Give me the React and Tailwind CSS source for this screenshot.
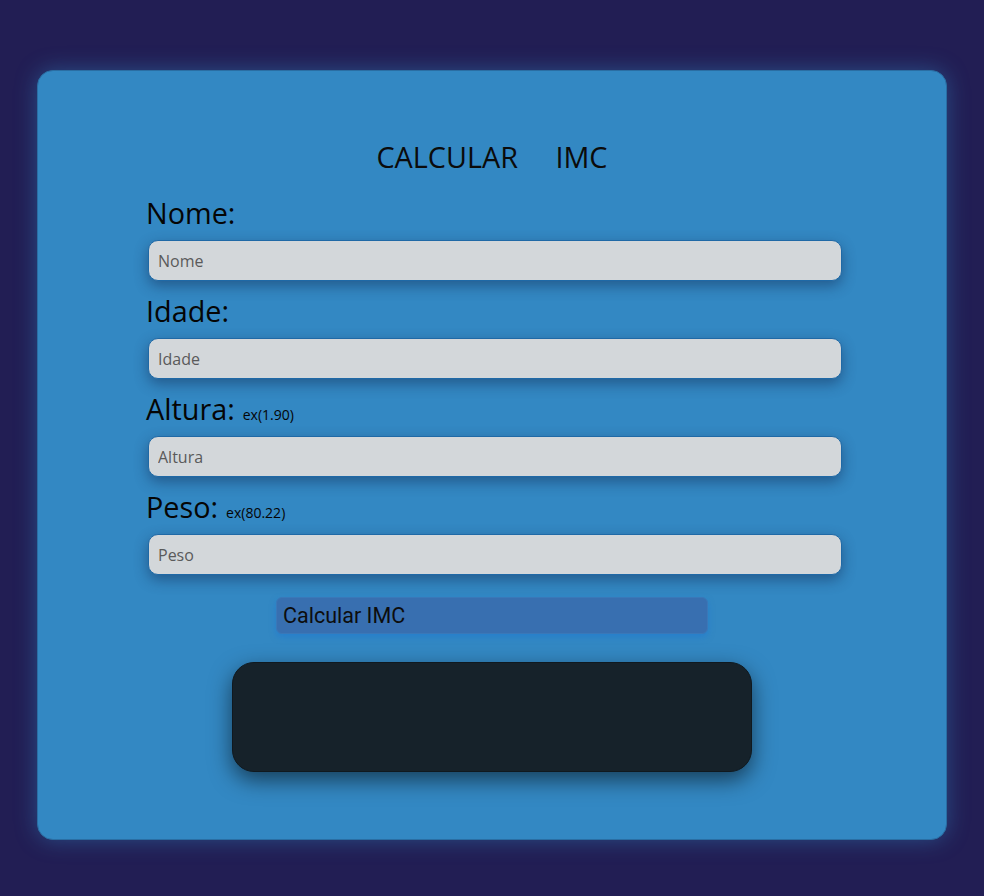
import React, { useState } from "react";

const fields = [
  { key: "nome", label: "Nome:", placeholder: "Nome" },
  { key: "idade", label: "Idade:", placeholder: "Idade" },
  { key: "altura", label: "Altura:", hint: "ex(1.90)", placeholder: "Altura" },
  { key: "peso", label: "Peso:", hint: "ex(80.22)", placeholder: "Peso" },
];

export default function App() {
  const [values, setValues] = useState({});

  return (
    <div className="min-h-[896px] bg-[#221e54] pt-[70px] pb-[56px] font-['Open_Sans',sans-serif]">
      <div className="mx-auto w-[910px] h-[770px] rounded-[16px] bg-[#3388c3] border border-[#2a6ea3] shadow-[0_0_22px_rgba(51,136,195,0.45)] pt-[67px]">
        <h1 className="text-center text-[28.8px] leading-[38px] text-[#0b0b0b] whitespace-pre">CALCULAR     IMC</h1>

        <form className="mt-[17px] ml-[108px] w-[696px]" onSubmit={(e) => e.preventDefault()}>
          {fields.map((f, i) => (
            <div key={f.key} className={i > 0 ? "mt-[10px]" : ""}>
              <label className="block h-[38px] text-[28.8px] leading-[40px] text-[#050505]">
                {f.label}
                {f.hint && <span className="ml-[8px] text-[14px] leading-none">{f.hint}</span>}
              </label>
              <input
                value={values[f.key] || ""}
                onChange={(e) => setValues({ ...values, [f.key]: e.target.value })}
                placeholder={f.placeholder}
                className="mt-[9px] ml-[2px] block w-[694px] h-[41px] rounded-[10px] bg-[#d3d7da] border border-[#1f69a6] px-[9px] text-[16px] text-[#333] placeholder:text-[#5a5a5a] shadow-[0_5px_14px_rgba(15,35,75,0.45)] outline-none"
              />
            </div>
          ))}

          <button
            type="submit"
            className="mt-[22px] ml-[130px] block w-[432px] h-[37px] rounded-[6px] bg-[#386fb0] border border-[#3a78b8] px-[6px] pt-[2px] text-left font-['Roboto',sans-serif] text-[21.5px] text-[#0d0d0d] shadow-[0_3px_6px_rgba(30,120,210,0.6)]"
          >
            Calcular IMC
          </button>
        </form>

        <div className="mx-auto mt-[28px] w-[520px] h-[110px] rounded-[22px] bg-[#16222a] border border-[#10191f] shadow-[0_8px_22px_rgba(0,0,0,0.55)]" />
      </div>
    </div>
  );
}
